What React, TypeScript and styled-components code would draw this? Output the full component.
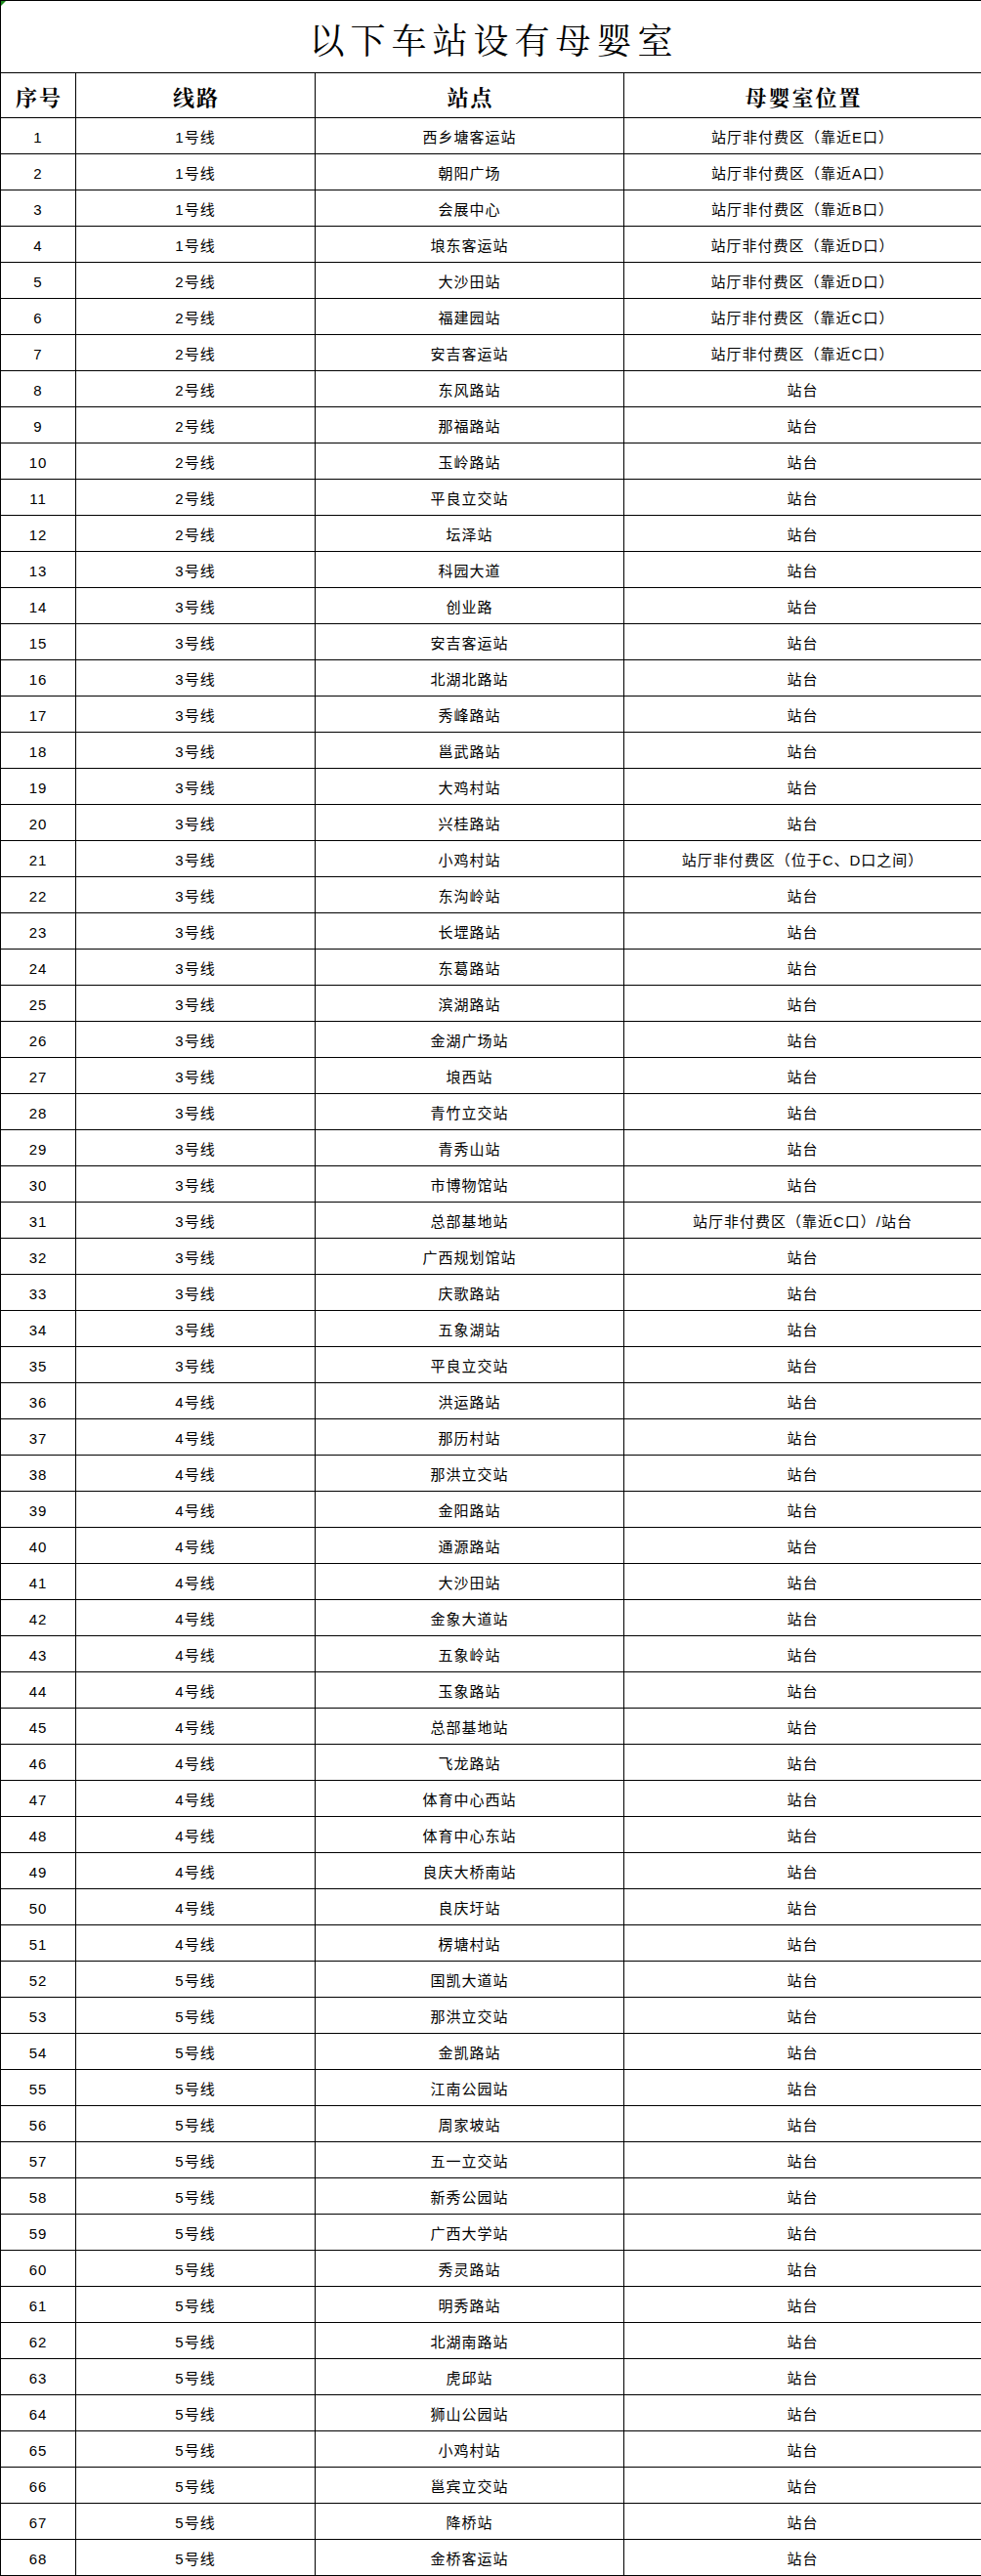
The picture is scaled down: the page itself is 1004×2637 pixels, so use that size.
import React from "react";
import styled, { createGlobalStyle } from "styled-components";

const GlobalStyle = createGlobalStyle`
  html, body { margin: 0; padding: 0; background: #ffffff; }
  body { font-family: "Liberation Sans", "Noto Sans CJK SC", sans-serif; color: #000; }
`;

type Row = [string, string, string];

const P = "站台";
const rows: Row[] = [
  ["1号线", "西乡塘客运站", "站厅非付费区（靠近E口）"],
  ["1号线", "朝阳广场", "站厅非付费区（靠近A口）"],
  ["1号线", "会展中心", "站厅非付费区（靠近B口）"],
  ["1号线", "埌东客运站", "站厅非付费区（靠近D口）"],
  ["2号线", "大沙田站", "站厅非付费区（靠近D口）"],
  ["2号线", "福建园站", "站厅非付费区（靠近C口）"],
  ["2号线", "安吉客运站", "站厅非付费区（靠近C口）"],
  ["2号线", "东风路站", P],
  ["2号线", "那福路站", P],
  ["2号线", "玉岭路站", P],
  ["2号线", "平良立交站", P],
  ["2号线", "坛泽站", P],
  ["3号线", "科园大道", P],
  ["3号线", "创业路", P],
  ["3号线", "安吉客运站", P],
  ["3号线", "北湖北路站", P],
  ["3号线", "秀峰路站", P],
  ["3号线", "邕武路站", P],
  ["3号线", "大鸡村站", P],
  ["3号线", "兴桂路站", P],
  ["3号线", "小鸡村站", "站厅非付费区（位于C、D口之间）"],
  ["3号线", "东沟岭站", P],
  ["3号线", "长堽路站", P],
  ["3号线", "东葛路站", P],
  ["3号线", "滨湖路站", P],
  ["3号线", "金湖广场站", P],
  ["3号线", "埌西站", P],
  ["3号线", "青竹立交站", P],
  ["3号线", "青秀山站", P],
  ["3号线", "市博物馆站", P],
  ["3号线", "总部基地站", "站厅非付费区（靠近C口）/站台"],
  ["3号线", "广西规划馆站", P],
  ["3号线", "庆歌路站", P],
  ["3号线", "五象湖站", P],
  ["3号线", "平良立交站", P],
  ["4号线", "洪运路站", P],
  ["4号线", "那历村站", P],
  ["4号线", "那洪立交站", P],
  ["4号线", "金阳路站", P],
  ["4号线", "通源路站", P],
  ["4号线", "大沙田站", P],
  ["4号线", "金象大道站", P],
  ["4号线", "五象岭站", P],
  ["4号线", "玉象路站", P],
  ["4号线", "总部基地站", P],
  ["4号线", "飞龙路站", P],
  ["4号线", "体育中心西站", P],
  ["4号线", "体育中心东站", P],
  ["4号线", "良庆大桥南站", P],
  ["4号线", "良庆圩站", P],
  ["4号线", "楞塘村站", P],
  ["5号线", "国凯大道站", P],
  ["5号线", "那洪立交站", P],
  ["5号线", "金凯路站", P],
  ["5号线", "江南公园站", P],
  ["5号线", "周家坡站", P],
  ["5号线", "五一立交站", P],
  ["5号线", "新秀公园站", P],
  ["5号线", "广西大学站", P],
  ["5号线", "秀灵路站", P],
  ["5号线", "明秀路站", P],
  ["5号线", "北湖南路站", P],
  ["5号线", "虎邱站", P],
  ["5号线", "狮山公园站", P],
  ["5号线", "小鸡村站", P],
  ["5号线", "邕宾立交站", P],
  ["5号线", "降桥站", P],
  ["5号线", "金桥客运站", P],
];

const Sheet = styled.div`
  position: relative;
  width: 1004px;
`;

const CornerMark = styled.div`
  position: absolute;
  top: 1px;
  left: 1px;
  width: 0;
  height: 0;
  border-top: 5px solid #1e8a1e;
  border-right: 5px solid transparent;
`;

const Table = styled.table`
  width: 1004px;
  border-collapse: collapse;
  table-layout: fixed;
`;

const TitleCell = styled.th`
  box-sizing: border-box;
  height: 74px;
  padding: 4px 0 0 6px;
  border: 1px solid #000;
  font-family: "Noto Serif CJK SC", "Noto Sans CJK SC", serif;
  font-size: 36px;
  line-height: 44px;
  font-weight: 400;
  letter-spacing: 6px;
  text-align: center;
  vertical-align: middle;
`;

const HeadCell = styled.th`
  box-sizing: border-box;
  height: 46px;
  padding: 3px 0 0 2px;
  border: 1px solid #000;
  font-family: "Noto Serif CJK SC", "Noto Sans CJK SC", serif;
  font-size: 22px;
  line-height: 28px;
  font-weight: 700;
  letter-spacing: 2px;
  text-align: center;
  vertical-align: middle;
`;

const Cell = styled.td`
  box-sizing: border-box;
  height: 37px;
  padding: 3px 0 0 0;
  border: 1px solid #000;
  font-family: "Liberation Sans", "Noto Sans CJK SC", sans-serif;
  font-size: 15px;
  line-height: 18px;
  letter-spacing: 1px;
  text-align: center;
  vertical-align: middle;
  white-space: nowrap;
`;

export default function App() {
  return (
    <>
      <GlobalStyle />
      <Sheet>
        <CornerMark />
        <Table>
          <colgroup>
            <col style={{ width: 77 }} />
            <col style={{ width: 245 }} />
            <col style={{ width: 316 }} />
            <col style={{ width: 366 }} />
          </colgroup>
          <thead>
            <tr>
              <TitleCell colSpan={4}>以下车站设有母婴室</TitleCell>
            </tr>
            <tr>
              <HeadCell>序号</HeadCell>
              <HeadCell>线路</HeadCell>
              <HeadCell>站点</HeadCell>
              <HeadCell>母婴室位置</HeadCell>
            </tr>
          </thead>
          <tbody>
            {rows.map((r, i) => (
              <tr key={i}>
                <Cell>{i + 1}</Cell>
                <Cell>{r[0]}</Cell>
                <Cell>{r[1]}</Cell>
                <Cell>{r[2]}</Cell>
              </tr>
            ))}
          </tbody>
        </Table>
      </Sheet>
    </>
  );
}
